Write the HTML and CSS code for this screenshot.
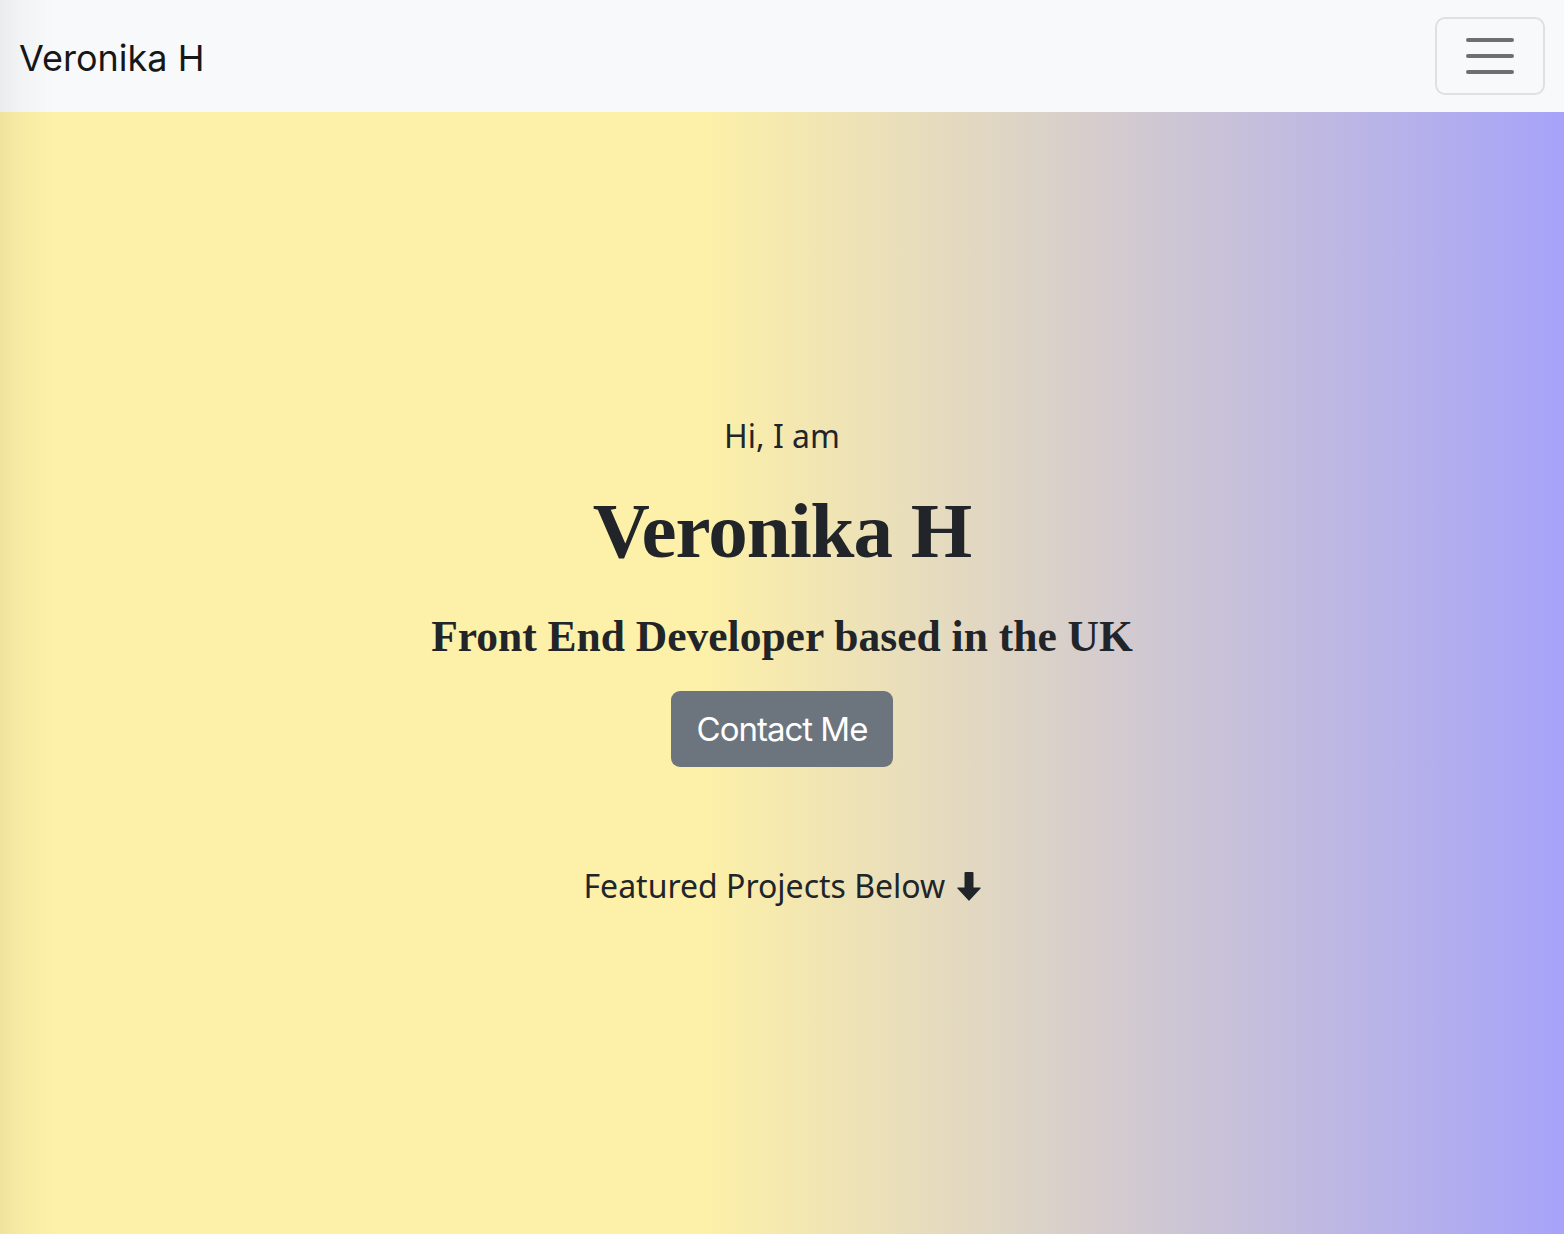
FILE: index.html
```html
<!DOCTYPE html>
<html lang="en">
<head>
<meta charset="utf-8">
<title>Veronika H</title>
<link rel="stylesheet" href="styles.css">
</head>
<body>
<nav class="navbar">
  <a class="brand" href="#">Veronika H</a>
  <button class="toggler" type="button" aria-label="Toggle navigation">
    <svg width="48" height="36" viewBox="0 0 48 36" aria-hidden="true">
      <path d="M2 2H46M2 18H46M2 34H46" stroke="#6f6f6f" stroke-width="4" stroke-linecap="round" fill="none"/>
    </svg>
  </button>
</nav>
<main class="hero">
  <p class="greet">Hi, I am</p>
  <h1 class="name">Veronika H</h1>
  <h3 class="role">Front End Developer based in the UK</h3>
  <a class="btn" href="#">Contact Me</a>
  <p class="featured">Featured Projects Below <svg class="arrow" width="24" height="29" viewBox="0 0 24 29" aria-hidden="true"><path d="M7.5 1A1 1 0 0 1 8.5 0h7a1 1 0 0 1 1 1V15.5h6.6a.6.6 0 0 1 .43 1.02L12.4 28.6a.55.55 0 0 1-.8 0L.47 16.52A.6.6 0 0 1 .9 15.5h6.6z" fill="#212529"/></svg></p>
</main>
<div class="edge-shade"></div>
</body>
</html>
```
FILE: styles.css
```css
* { box-sizing: border-box; }
html, body { margin: 0; padding: 0; }
body {
  min-height: 1234px;
  color: #212529;
  font-family: "Noto Sans", "Open Sans", sans-serif;
  display: flex;
  flex-direction: column;
}
.navbar {
  height: 112px;
  background: #f8f9fa;
  display: flex;
  align-items: center;
  justify-content: space-between;
  padding: 0 19px 0 19px;
  flex: none;
}
.brand {
  font-family: Inter, "Liberation Sans", sans-serif;
  font-size: 36px;
  color: #171717;
  text-decoration: none;
  line-height: 1;
  padding-top: 3px;
}
.toggler {
  width: 110px;
  height: 78px;
  border: 2px solid #dfe0e1;
  border-radius: 10px;
  background: transparent;
  display: flex;
  align-items: center;
  justify-content: center;
  padding: 0;
}
.toggler svg { display: block; }
.hero {
  flex: 1;
  background: linear-gradient(to right, #fdf0a8 0%, #fdf0a8 45%, #a6a3f9 100%);
  display: flex;
  flex-direction: column;
  align-items: center;
  padding-top: 300px;
  text-align: center;
}
.greet {
  margin: 0;
  font-size: 32px;
  line-height: 48px;
}
.name {
  margin: 24px 0 0;
  font-family: "Liberation Serif", "Times New Roman", serif;
  font-weight: 700;
  font-size: 79px;
  line-height: 1.2;
  letter-spacing: -1px;
}
.role {
  margin: 31px 0 0;
  font-family: "Liberation Serif", "Times New Roman", serif;
  font-weight: 700;
  font-size: 43.5px;
  line-height: 1.2;
}
.btn {
  margin-top: 29px;
  height: 76px;
  padding: 0 26px;
  display: flex;
  align-items: center;
  background: #6c757d;
  color: #fff;
  border-radius: 9px;
  font-family: Inter, "Liberation Sans", sans-serif;
  font-size: 33px;
  letter-spacing: -1px;
  text-decoration: none;
}
.featured {
  margin: 95px 0 0;
  font-size: 32px;
  line-height: 48px;
}
.arrow {
  vertical-align: -3px;
  margin-left: 3px;
}
.edge-shade {
  position: fixed;
  top: 0;
  left: 0;
  width: 60px;
  height: 100%;
  pointer-events: none;
  background: linear-gradient(to right, rgba(0,0,0,0.05), rgba(0,0,0,0.025) 20px, rgba(0,0,0,0) 55px);
}
```
